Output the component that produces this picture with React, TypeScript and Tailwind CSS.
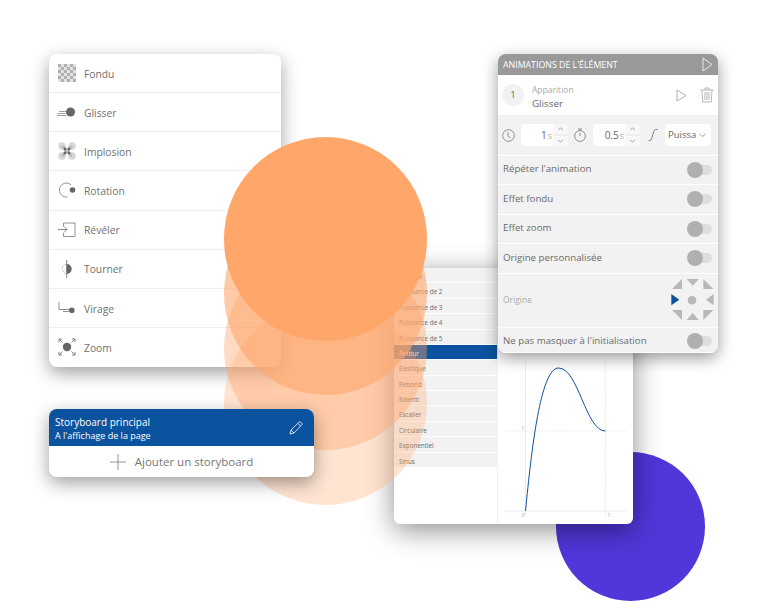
import React from "react";

const font = { fontFamily: '"Open Sans", "Noto Sans", sans-serif' };

function Fade() {
  return (
    <svg width="18" height="18" viewBox="0 0 18 18">
      <rect width="18" height="18" fill="#e2e2e2" />
      {Array.from({ length: 36 }).map((_, i) => {
        const x = i % 6;
        const y = Math.floor(i / 6);
        return (x + y) % 2 === 0 ? <rect key={i} x={x * 3} y={y * 3} width="3" height="3" fill="#b0b0b0" /> : null;
      })}
    </svg>
  );
}
function Slide() {
  return (
    <svg width="20" height="18" viewBox="0 0 20 18" fill="none">
      <circle cx="13.5" cy="9" r="4.5" fill="#666" />
      <path d="M2 8.5h7M0.5 10.5h8M0 12.5h9" stroke="#777" strokeWidth="0.7" />
    </svg>
  );
}
function Implode() {
  return (
    <svg width="18" height="18" viewBox="0 0 18 18">
      <circle cx="4" cy="4" r="3.8" fill="#d8d8d8" />
      <circle cx="14" cy="4" r="3.8" fill="#d8d8d8" />
      <circle cx="4" cy="14" r="3.8" fill="#d8d8d8" />
      <circle cx="14" cy="14" r="3.8" fill="#d8d8d8" />
      <path d="M4 4L14 14M14 4L4 14" stroke="#bbb" strokeWidth="3" />
      <circle cx="7" cy="7" r="1.4" fill="#666" />
      <circle cx="11" cy="7" r="1.4" fill="#666" />
      <circle cx="7" cy="11" r="1.4" fill="#666" />
      <circle cx="11" cy="11" r="1.4" fill="#666" />
    </svg>
  );
}
function Rotate() {
  return (
    <svg width="18" height="18" viewBox="0 0 18 18" fill="none">
      <path d="M13 3.8A7 7 0 1 0 9.5 16" stroke="#666" strokeWidth="0.7" />
      <circle cx="14.5" cy="9" r="2.8" fill="#666" />
    </svg>
  );
}
function Reveal() {
  return (
    <svg width="18" height="16" viewBox="0 0 18 16" fill="none">
      <path d="M5.5 1h11.5v13.5h-11.5v-3.5M5.5 1v3.5" stroke="#777" strokeWidth="0.8" />
      <path d="M0 7.5h9M6 4.5l3 3-3 3" stroke="#666" strokeWidth="0.8" />
    </svg>
  );
}
function Flip() {
  return (
    <svg width="18" height="18" viewBox="0 0 18 18" fill="none">
      <path d="M8.7 4a5 5 0 0 1 0 10z" fill="#666" />
      <path d="M8 4.2a5 5 0 0 0 0 9.6" stroke="#777" strokeWidth="0.7" strokeDasharray="1 1" />
      <path d="M8.7 0v18" stroke="#666" strokeWidth="0.8" />
    </svg>
  );
}
function Turn() {
  return (
    <svg width="18" height="14" viewBox="0 0 18 14" fill="none">
      <path d="M1 1v7.5h6.5M5 10.5h6M5 8.5h6" stroke="#666" strokeWidth="0.7" />
      <circle cx="13.8" cy="9.3" r="2.8" fill="#666" />
    </svg>
  );
}
function Zoom() {
  return (
    <svg width="18" height="18" viewBox="0 0 18 18" fill="none">
      <circle cx="9" cy="9" r="4.2" fill="#666" />
      <path d="M1 1l3.5 3.5M1 1v3M1 1h3M17 1l-3.5 3.5M17 1v3M17 1h-3M1 17l3.5-3.5M1 17v-3M1 17h3M17 17l-3.5-3.5M17 17v-3M17 17h-3" stroke="#666" strokeWidth="0.8" />
    </svg>
  );
}

const effects: [string, React.ReactNode][] = [
  ["Fondu", <Fade />],
  ["Glisser", <Slide />],
  ["Implosion", <Implode />],
  ["Rotation", <Rotate />],
  ["Révéler", <Reveal />],
  ["Tourner", <Flip />],
  ["Virage", <Turn />],
  ["Zoom", <Zoom />],
];

const easings = [
  "Linéaire",
  "Puissance de 2",
  "Puissance de 3",
  "Puissance de 4",
  "Puissance de 5",
  "Retour",
  "Elastique",
  "Rebond",
  "Ralenti",
  "Escalier",
  "Circulaire",
  "Exponentiel",
  "Sinus",
];

function Toggle() {
  return (
    <div className="flex items-center w-[25px] h-4 relative">
      <div className="w-[20px] h-[10px] rounded-full bg-[#dedede] ml-[5px]" />
      <div className="w-4 h-4 rounded-full bg-[#b0b0b0] absolute left-0 top-0" />
    </div>
  );
}

function OptionRow({ label, h }: { label: string; h: string }) {
  return (
    <div className={`flex items-center justify-between pl-[5px] pr-[6px] border-b border-white bg-[#f2f2f2] ${h}`}>
      <span className="text-[9.7px] text-[#6a6a6a]">{label}</span>
      <Toggle />
    </div>
  );
}

function Stepper() {
  return (
    <div className="w-[15px] h-full flex flex-col items-center justify-center bg-[#f7f7f7] rounded-r">
      <svg width="15" height="22" viewBox="0 0 15 22" fill="none">
        <path d="M5 6l2.5-2 2.5 2M5 16l2.5 2 2.5-2" stroke="#888" strokeWidth="0.7" />
        <path d="M0 11h15" stroke="#ddd" strokeWidth="0.7" />
      </svg>
    </div>
  );
}

function NumberBox({ value, w }: { value: string; w: string }) {
  return (
    <div className={`flex items-center h-[22px] bg-white rounded ${w}`}>
      <div className="flex-1 text-right text-[10px] text-[#666] pr-[1px]">
        {value}
        <span className="text-[9px] text-[#aaa] ml-[1px]">s</span>
      </div>
      <Stepper />
    </div>
  );
}

export default function App() {
  return (
    <div className="relative w-[772px] h-[601px] bg-white overflow-hidden" style={font}>
      {/* purple circle */}
      <div className="absolute left-[556px] top-[452px] w-[149px] h-[149px] rounded-full bg-[#4f37d9]" />

      {/* effects card */}
      <div className="absolute left-[49px] top-[54px] w-[232px] h-[313px] bg-white rounded-lg shadow-[0_6px_18px_rgba(0,0,0,0.38)] grid grid-rows-8 overflow-hidden">
        {effects.map(([label, icon], i) => (
          <div key={label} className={`flex items-center ${i < 7 ? "border-b border-[#eeeeee]" : ""}`}>
            <div className="w-[35px] flex justify-end pr-[7px] shrink-0">
              <div className="w-[20px] flex justify-center">{icon}</div>
            </div>
            <span className="text-[10.3px] text-[#707070] pt-[3px]">{label}</span>
          </div>
        ))}
      </div>

      {/* easing panel */}
      <div className="absolute left-[394px] top-[268px] w-[239px] h-[256px] bg-white rounded-md shadow-[0_6px_28px_rgba(0,0,0,0.45)] flex overflow-hidden">
        <div className="w-[104px] border-r border-[#f0f0f0] shrink-0">
          <div className="grid grid-rows-13 h-[200px]">
            {easings.map((e) => (
              <div
                key={e}
                className={`flex items-center pl-[5px] pt-[3px] text-[6.3px] border-b border-white ${
                  e === "Retour" ? "bg-[#0b539f] text-white" : "bg-[#f2f2f2] text-[#666]"
                }`}
              >
                {e}
              </div>
            ))}
          </div>
        </div>
        <svg className="flex-1" width="135" height="256" viewBox="499 268 134 256" fill="none">
          <path d="M526 362v154" stroke="#ececec" strokeWidth="1" />
          <path d="M505 511h122" stroke="#ececec" strokeWidth="1" />
          <path d="M505 431h122" stroke="#d9d9d9" strokeWidth="0.8" strokeDasharray="1 1.5" />
          <path d="M606 362v154" stroke="#d9d9d9" strokeWidth="0.8" strokeDasharray="1 1.5" />
          <text x="522" y="430" fontSize="5" fill="#999">1</text>
          <text x="522" y="517" fontSize="5" fill="#999">0</text>
          <text x="608" y="517" fontSize="5" fill="#999">1</text>
          <path d="M526 511C532 450 541 368 559 368C579 368 586 431 606 431" stroke="#0b539f" strokeWidth="1" />
        </svg>
      </div>

      {/* orange circles */}
      <div className="absolute left-[224px] top-[301.5px] w-[203px] h-[203px] rounded-full bg-[#ffa66b]/30" />
      <div className="absolute left-[224px] top-[246.5px] w-[203px] h-[203px] rounded-full bg-[#ffa66b]/40" />
      <div className="absolute left-[224px] top-[191.5px] w-[203px] h-[203px] rounded-full bg-[#ffa66b]/60" />
      <div className="absolute left-[224px] top-[137px] w-[203px] h-[204px] rounded-full bg-[#ffa66b]" />

      {/* storyboard card */}
      <div className="absolute left-[49px] top-[409px] w-[265px] h-[68px] rounded-lg overflow-hidden bg-white shadow-[0_6px_18px_rgba(0,0,0,0.38)]">
        <div className="h-[37px] bg-[#0b539f] flex items-center justify-between pl-[6px] pr-[11px] text-white">
          <div className="flex flex-col leading-[14px] pt-[2px]">
            <span className="text-[10px]">Storyboard principal</span>
            <span className="text-[9px]">A l'affichage de la page</span>
          </div>
          <svg width="14" height="14" viewBox="0 0 14 14" fill="none">
            <path d="M1 13l1-4L10 1.2a1.2 1.2 0 0 1 1.7 0l1 1a1.2 1.2 0 0 1 0 1.7L5 12z M8.8 2.4l2.8 2.8 M2 9l3 3" stroke="#fff" strokeWidth="0.8" />
          </svg>
        </div>
        <div className="h-[31px] flex items-center justify-center gap-[9px] text-[11.5px] text-[#777]">
          <svg width="16" height="16" viewBox="0 0 16 16" fill="none">
            <path d="M8 0v16M0 8h16" stroke="#888" strokeWidth="0.9" />
          </svg>
          <span>Ajouter un storyboard</span>
        </div>
      </div>

      {/* element animations panel */}
      <div className="absolute left-[498px] top-[54px] w-[220px] h-[299px] rounded-lg overflow-hidden bg-[#f2f2f2] shadow-[0_5px_16px_rgba(0,0,0,0.4)] flex flex-col">
        <div className="h-[21px] bg-[#999] flex items-center justify-between pl-[5px] pr-[5px] shrink-0">
          <span className="text-[8.8px] font-medium text-white pt-[2px]">ANIMATIONS DE L'ÉLÉMENT</span>
          <svg width="11" height="15" viewBox="0 0 11 15" fill="none">
            <path d="M1 1l9 6.5-9 6.5z" stroke="#fff" strokeWidth="0.8" />
          </svg>
        </div>
        <div className="h-[41px] bg-white flex items-center pl-[4px] pr-[4px] border-b border-[#eee] shrink-0">
          <div className="w-[22px] h-[22px] rounded-full bg-[#f2f2f2] flex items-center justify-center text-[9.5px] text-[#666] pt-[1px]">1</div>
          <div className="ml-[8px] flex flex-col flex-1 leading-[14px] pt-[3px]">
            <span className="text-[8.5px] text-[#aaa]">Apparition</span>
            <span className="text-[9.8px] text-[#666]">Glisser</span>
          </div>
          <svg className="mr-[13px]" width="11" height="13" viewBox="0 0 11 13" fill="none">
            <path d="M1 1l9 5.5-9 5.5z" stroke="#999" strokeWidth="0.8" />
          </svg>
          <svg width="14" height="16" viewBox="0 0 14 16" fill="none">
            <path d="M0.5 3h13M5 3V1h4v2M2 3l.7 12h8.6L12 3M5 5v8M7 5v8M9 5v8" stroke="#999" strokeWidth="0.7" />
          </svg>
        </div>
        <div className="h-[39.5px] flex items-center pl-[4px] border-b border-white shrink-0">
          <svg width="13" height="13" viewBox="0 0 13 13" fill="none">
            <circle cx="6.5" cy="6.5" r="5.8" stroke="#777" strokeWidth="0.8" />
            <path d="M6 3v4l2.5 2" stroke="#777" strokeWidth="0.8" />
          </svg>
          <NumberBox value="1" w="w-[47px] ml-[6px]" />
          <svg className="ml-[6px]" width="12" height="14" viewBox="0 0 12 14" fill="none">
            <circle cx="6" cy="8" r="5.4" stroke="#777" strokeWidth="0.8" />
            <path d="M4 1h4M6 1v2M6 5v3" stroke="#777" strokeWidth="0.8" />
          </svg>
          <NumberBox value="0.5" w="w-[47px] ml-[7px]" />
          <svg className="ml-[8px]" width="10" height="12" viewBox="0 0 10 12" fill="none">
            <path d="M0.5 11.5H2C4.5 11.5 5 0.5 7.5 0.5H9.5" stroke="#666" strokeWidth="0.8" />
          </svg>
          <div className="ml-[7px] w-[46px] h-[22px] bg-white rounded flex items-center justify-between pl-[3px] pr-[5px] text-[9.5px] text-[#666]">
            <span>Puissa</span>
            <svg width="7" height="5" viewBox="0 0 7 5" fill="none">
              <path d="M0.5 1l3 2.5 3-2.5" stroke="#777" strokeWidth="0.7" />
            </svg>
          </div>
        </div>
        <OptionRow label="Répéter l'animation" h="h-[29.5px]" />
        <OptionRow label="Effet fondu" h="h-[29.5px]" />
        <OptionRow label="Effet zoom" h="h-[29.5px]" />
        <OptionRow label="Origine personnalisée" h="h-[29.5px]" />
        <div className="h-[54px] flex items-center justify-between pl-[5px] pr-[3px] border-b border-white shrink-0">
          <span className="text-[8.5px] text-[#aaa]">Origine</span>
          <svg width="44" height="42" viewBox="671 279 44 42">
            <g fill="#b8b8b8">
              <polygon points="672,289 682,289 682,279" />
              <polygon points="686.7,279 698.7,279 692.7,285.7" />
              <polygon points="703.3,279 703.3,289 713.3,289" />
              <polygon points="713.7,294 713.7,305.3 706,299.7" />
              <polygon points="672,310 682,310 682,320" />
              <polygon points="686.7,320 698.7,320 692.7,312.7" />
              <polygon points="703.3,310 713.3,310 703.3,320" />
              <circle cx="692" cy="300.3" r="4.3" />
            </g>
            <polygon points="671.3,294 671.3,305.3 679.3,299.7" fill="#0b539f" />
          </svg>
        </div>
        <OptionRow label="Ne pas masquer à l'initialisation" h="flex-1 pt-[3px]" />
      </div>
    </div>
  );
}
